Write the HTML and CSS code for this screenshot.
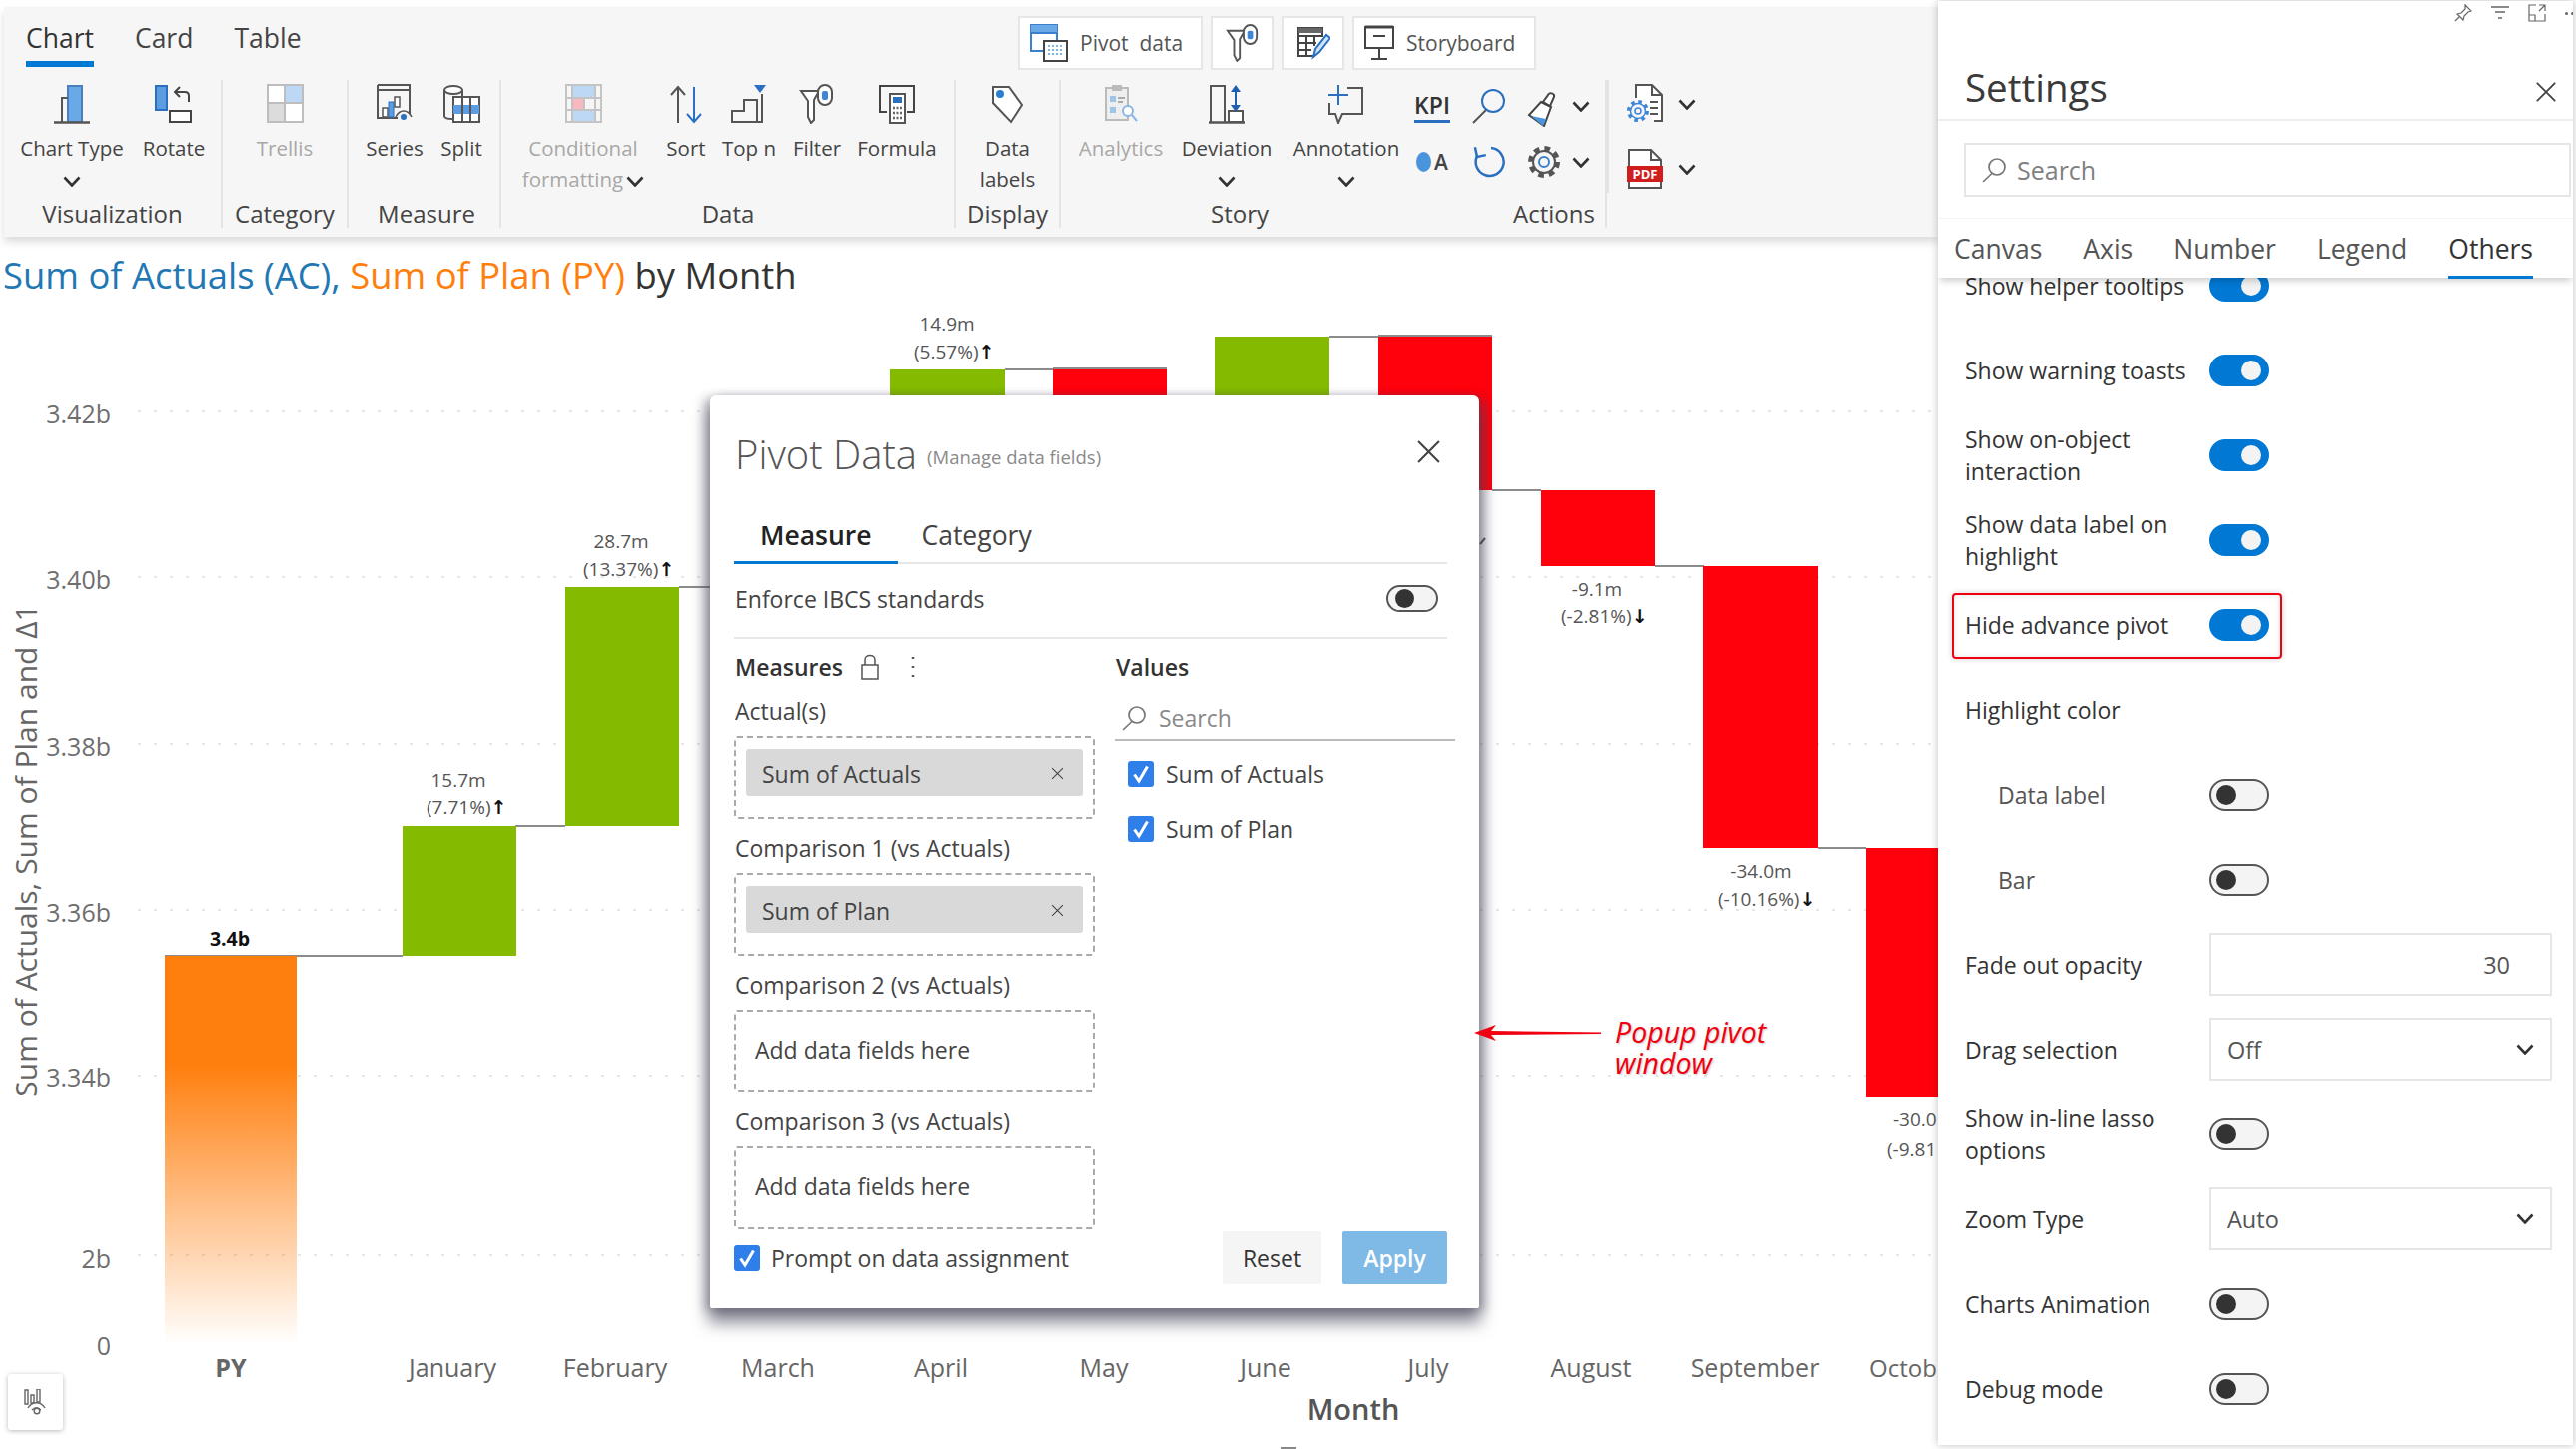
FILE: index.html
```html
<!DOCTYPE html>
<html lang="en">
<head>
<meta charset="utf-8">
<title>Pivot Data</title>
<link rel="stylesheet" href="styles.css">
</head>
<body>
<svg class="sprite" width="0" height="0" aria-hidden="true">
  <symbol id="chev" viewBox="0 0 18 11"><path d="M1.5 1.5 9 9.5l7.5-8" fill="none" stroke="#333" stroke-width="2.6"/></symbol>
  <symbol id="cross" viewBox="0 0 24 24"><path d="M2 2l20 20M22 2 2 22" fill="none" stroke="#444" stroke-width="2"/></symbol>
  <symbol id="mag" viewBox="0 0 26 26"><circle cx="16" cy="10" r="8" fill="none" stroke="#777" stroke-width="1.7"/><path d="M11 16.500 2 25" fill="none" stroke="#777" stroke-width="1.7"/></symbol>
  <symbol id="tick" viewBox="0 0 26 26"><rect width="26" height="26" rx="3" fill="#2f7fea"/><path d="M6.500 13.500 11 20 19.500 5.500" fill="none" stroke="#fff" stroke-width="3"/></symbol>
  <symbol id="funnel" viewBox="0 0 36 40"><path d="M2 7h18l-5 9v20l-3 3-3-6V17z" fill="#fff" stroke="#555" stroke-width="2"/><rect x="19" y="1" width="14" height="20" rx="7" fill="#fff" stroke="#555" stroke-width="2"/><rect x="23" y="7" width="6" height="9" rx="2" fill="#3f86d8"/></symbol>
</svg>

<div class="app">
  <main class="main">
    <header class="ribbon">
      <div class="ribbon-top">
        <nav class="rtabs">
          <span class="rtab rtab-on">Chart</span>
          <span class="rtab">Card</span>
          <span class="rtab">Table</span>
        </nav>
        <div class="quick">
          <button class="qbtn qbtn-pivot">
            <svg width="38" height="38" viewBox="0 0 38 38"><rect x="1" y="1" width="26" height="26" fill="#fff" stroke="#3b7fcf" stroke-width="2"/><rect x="1" y="1" width="26" height="8" fill="#6aa9e8"/><path d="M1 9h26" stroke="#3b7fcf" stroke-width="2"/><rect x="14" y="17" width="23" height="20" fill="#fff" stroke="#444" stroke-width="2"/><path d="M18 22h16M18 26h16M18 30h16" stroke="#7db5ea" stroke-width="2" stroke-dasharray="2 2"/></svg>
            <span>Pivot&nbsp; data</span>
          </button>
          <button class="qbtn qbtn-ico"><svg width="34" height="38" viewBox="0 0 36 40"><use href="#funnel"/></svg></button>
          <button class="qbtn qbtn-ico">
            <svg width="34" height="34" viewBox="0 0 34 34"><path d="M2 2h24v8H2zM2 10h22M2 10v20h16M2 17h18M2 24h13M10 10v20M18 10v10" fill="none" stroke="#444" stroke-width="2"/><path d="M2 2h24v5H2z" fill="#666"/><path d="M17 31l2-8 11-14 4 3-11 14z" fill="#cfe3f8" stroke="#2a6fc0" stroke-width="2"/></svg>
          </button>
          <button class="qbtn qbtn-story">
            <svg width="30" height="36" viewBox="0 0 30 36"><rect x="1" y="2" width="28" height="21" fill="#fff" stroke="#444" stroke-width="2"/><path d="M1 2h28" stroke="#444" stroke-width="3"/><path d="M9 11h12" stroke="#444" stroke-width="2"/><path d="M15 23v11M7 34h16" stroke="#444" stroke-width="2"/></svg>
            <span>Storyboard</span>
          </button>
        </div>
      </div>

      <div class="groups">
        <section class="group g-viz">
          <div class="tools">
            <div class="tool">
              <svg class="ic" width="36" height="40" viewBox="0 0 36 40"><rect x="14" y="2" width="14" height="36" fill="#6aa9e8" stroke="#4a7fbd" stroke-width="2"/><path d="M14 14H8v24" fill="none" stroke="#555" stroke-width="2"/><path d="M0 38.500h36" stroke="#555" stroke-width="2.500"/></svg>
              <span class="tlabel">Chart Type</span>
              <svg class="tchev" width="18" height="11"><use href="#chev"/></svg>
            </div>
            <div class="tool">
              <svg class="ic" width="38" height="40" viewBox="0 0 38 40"><rect x="1" y="2" width="11" height="24" fill="#5b9de0" stroke="#2a6fc0" stroke-width="2"/><path d="M34 18v-6c0-3-2-4-4-4h-9M25 3l-5 5 5 5" fill="none" stroke="#444" stroke-width="2"/><rect x="15" y="27" width="21" height="11" fill="#fff" stroke="#444" stroke-width="2"/></svg>
              <span class="tlabel">Rotate</span>
            </div>
          </div>
          <h3 class="glabel">Visualization</h3>
        </section>

        <section class="group g-cat">
          <div class="tools">
            <div class="tool is-off">
              <svg class="ic" width="37" height="40" viewBox="0 0 37 40"><rect x="1" y="1" width="17" height="18" fill="#fff"/><rect x="18" y="1" width="18" height="18" fill="#bcd8f5"/><rect x="1" y="19" width="17" height="19" fill="#dcdcdc"/><rect x="18" y="19" width="18" height="19" fill="#fff"/><path d="M1 1h35v37H1zM18 1v37M1 19h35" fill="none" stroke="#bdbdbd" stroke-width="2"/></svg>
              <span class="tlabel">Trellis</span>
            </div>
          </div>
          <h3 class="glabel">Category</h3>
        </section>

        <section class="group g-mea">
          <div class="tools">
            <div class="tool">
              <svg class="ic" width="38" height="40" viewBox="0 0 38 40"><path d="M2 1h32v29M2 1v33h20" fill="none" stroke="#555" stroke-width="2"/><path d="M2 6h32" stroke="#555" stroke-width="2"/><rect x="7" y="24" width="5" height="9" fill="#fff" stroke="#555" stroke-width="1.500"/><rect x="13" y="18" width="5" height="15" fill="#5b9de0" stroke="#2a6fc0"/><rect x="19" y="13" width="5" height="10" fill="#fff" stroke="#555" stroke-width="1.500"/><path d="M20 33c4-8 12-8 16 0" fill="#f3f3f3" stroke="#555" stroke-width="1.500"/><circle cx="28" cy="33" r="3" fill="#2a6fc0"/></svg>
              <span class="tlabel">Series</span>
            </div>
            <div class="tool">
              <svg class="ic" width="38" height="40" viewBox="0 0 38 40"><ellipse cx="11" cy="6" rx="9" ry="4" fill="#fff" stroke="#555" stroke-width="2"/><path d="M2 6v26c0 2 4 3 8 3M20 6v6" fill="none" stroke="#555" stroke-width="2"/><rect x="11" y="13" width="26" height="25" fill="#fff" stroke="#555" stroke-width="2"/><rect x="11" y="21" width="26" height="9" fill="#5b9de0"/><path d="M20 13v25M28 13v25" stroke="#555" stroke-width="2"/></svg>
              <span class="tlabel">Split</span>
            </div>
          </div>
          <h3 class="glabel">Measure</h3>
        </section>

        <section class="group g-data">
          <div class="tools">
            <div class="tool is-off">
              <svg class="ic" width="37" height="40" viewBox="0 0 37 40"><rect x="7" y="1" width="23" height="12" fill="#bcd8f5"/><rect x="7" y="14" width="12" height="12" fill="#f6b9bf"/><rect x="7" y="27" width="23" height="11" fill="#bcd8f5"/><path d="M1 1h35v37H1zM1 14h35M1 26h35M7 1v37M30 1v37M19 14v12" fill="none" stroke="#c4c4c4" stroke-width="2"/></svg>
              <span class="tlabel">Conditional formatting<svg class="inchev" width="18" height="11"><use href="#chev"/></svg></span>
            </div>
            <div class="tool">
              <svg class="ic" width="34" height="40" viewBox="0 0 34 40"><path d="M9 39V3M2 11l7-8 7 8" fill="none" stroke="#555" stroke-width="2"/><path d="M25 3v35M18 30l7 8 7-8" fill="none" stroke="#2a6fc0" stroke-width="2"/></svg>
              <span class="tlabel">Sort</span>
            </div>
            <div class="tool">
              <svg class="ic" width="36" height="40" viewBox="0 0 36 40"><path d="M1 38V27h12V16h13V38zM31 10v28H1" fill="none" stroke="#555" stroke-width="2"/><path d="M23 1h12l-6 8z" fill="#2a6fc0"/></svg>
              <span class="tlabel">Top n</span>
            </div>
            <div class="tool">
              <svg class="ic" width="36" height="40" viewBox="0 0 36 40"><use href="#funnel"/></svg>
              <span class="tlabel">Filter</span>
            </div>
            <div class="tool">
              <svg class="ic" width="38" height="40" viewBox="0 0 38 40"><path d="M9 28H2V2h34v26h-7" fill="none" stroke="#444" stroke-width="2"/><rect x="12" y="10" width="15" height="29" fill="#fff" stroke="#555" stroke-width="2"/><rect x="15" y="13" width="9" height="6" fill="#2a6fc0"/><path d="M15 24h9M15 29h9M15 34h9" stroke="#666" stroke-width="2.500" stroke-dasharray="2 1.500"/></svg>
              <span class="tlabel">Formula</span>
            </div>
          </div>
          <h3 class="glabel">Data</h3>
        </section>

        <section class="group g-dis">
          <div class="tools">
            <div class="tool">
              <svg class="ic" width="36" height="40" viewBox="0 0 36 40"><path d="M3 3h16l13 18-11 17L3 19z" fill="#fff" stroke="#555" stroke-width="2"/><circle cx="10" cy="10" r="4" fill="#2a7fd0"/></svg>
              <span class="tlabel">Data labels</span>
            </div>
          </div>
          <h3 class="glabel">Display</h3>
        </section>

        <section class="group g-sto">
          <div class="tools">
            <div class="tool is-off">
              <svg class="ic" width="34" height="40" viewBox="0 0 34 40"><rect x="2" y="4" width="22" height="32" fill="#eee" stroke="#bbb" stroke-width="2"/><rect x="8" y="1" width="10" height="6" fill="#bbb"/><rect x="6" y="12" width="6" height="6" fill="#9fc4ea"/><rect x="6" y="23" width="6" height="6" fill="#9fc4ea"/><path d="M14 14h7M14 18h5" stroke="#aaa" stroke-width="2"/><circle cx="24" cy="27" r="5" fill="#fff" stroke="#8ab6e5" stroke-width="2"/><path d="M28 31l5 6" stroke="#8ab6e5" stroke-width="2"/></svg>
              <span class="tlabel">Analytics</span>
            </div>
            <div class="tool">
              <svg class="ic" width="38" height="40" viewBox="0 0 38 40"><path d="M3 38V2h14v36" fill="none" stroke="#555" stroke-width="2"/><path d="M1 38.500h36" stroke="#555" stroke-width="2.500"/><rect x="21" y="27" width="14" height="11" fill="#fff" stroke="#555" stroke-width="2"/><path d="M28 5v20" stroke="#1e5fae" stroke-width="2"/><path d="M23 8l5-7 5 7zM23 21l5 7 5-7z" fill="#1e5fae"/></svg>
              <span class="tlabel">Deviation</span>
              <svg class="tchev" width="18" height="11"><use href="#chev"/></svg>
            </div>
            <div class="tool">
              <svg class="ic" width="38" height="40" viewBox="0 0 38 40"><path d="M20 4h15v26H15l-4 9-3-9H2V19" fill="none" stroke="#555" stroke-width="2"/><path d="M11 1v20M1 11h20" stroke="#2a6fc0" stroke-width="2"/></svg>
              <span class="tlabel">Annotation</span>
              <svg class="tchev" width="18" height="11"><use href="#chev"/></svg>
            </div>
          </div>
          <h3 class="glabel">Story</h3>
        </section>

        <section class="group g-act">
          <div class="actions">
            <span class="kpi">KPI</span>
            <svg width="36" height="36" viewBox="0 0 36 36"><circle cx="23" cy="13" r="11" fill="none" stroke="#2a6fc0" stroke-width="2"/><path d="M16 22 3 35" stroke="#555" stroke-width="2"/></svg>
            <svg class="brush" width="36" height="36" viewBox="0 0 36 36"><path d="M15 11l10 5-7 19L3 24z" fill="#fff" stroke="#444" stroke-width="2"/><path d="M5 25l15 3-3 7z" fill="#4a93dd"/><path d="M22 4c1-3 7-2 6 2l-4 9-7-4z" fill="#fff" stroke="#444" stroke-width="2"/></svg>
            <svg width="18" height="11"><use href="#chev"/></svg>
            <span class="oa"><i class="oa-dot"></i>A</span>
            <svg width="34" height="34" viewBox="0 0 34 34"><path d="M20 3a14 14 0 1 1-14 8" fill="none" stroke="#2a6fc0" stroke-width="2.500"/><path d="M6 2v10h9" fill="none" stroke="#2a6fc0" stroke-width="2.500" transform="rotate(-12 6 12)"/></svg>
            <svg width="34" height="34" viewBox="0 0 34 34"><circle cx="17" cy="17" r="13.500" fill="none" stroke="#555" stroke-width="5" stroke-dasharray="5.600 5"/><circle cx="17" cy="17" r="11" fill="#f6f6f6" stroke="#555" stroke-width="2"/><circle cx="17" cy="17" r="5" fill="none" stroke="#3f7fc8" stroke-width="2"/></svg>
            <svg width="18" height="11"><use href="#chev"/></svg>
          </div>
          <h3 class="glabel glabel-act">Actions</h3>
        </section>

        <section class="g-exp">
          <svg width="38" height="40" viewBox="0 0 38 40"><path d="M10 14V1h16l10 10v26h-8" fill="#fff" stroke="#555" stroke-width="2"/><path d="M26 1v10h10" fill="none" stroke="#555" stroke-width="2"/><path d="M24 18h8M24 24h8M24 30h8" stroke="#555" stroke-width="2"/><circle cx="12" cy="27" r="9" fill="none" stroke="#3f86d8" stroke-width="4" stroke-dasharray="3.500 3.570"/><circle cx="12" cy="27" r="7.500" fill="#f6f6f6" stroke="#3f86d8" stroke-width="1.500"/><circle cx="12" cy="27" r="3" fill="none" stroke="#3f86d8" stroke-width="1.500"/></svg>
          <svg width="18" height="11"><use href="#chev"/></svg>
          <svg width="38" height="40" viewBox="0 0 38 40"><path d="M3 18V1h22l10 10v7M3 32v7h32v-7" fill="#fff" stroke="#555" stroke-width="2"/><path d="M25 1v10h10" fill="none" stroke="#555" stroke-width="2"/><rect x="1" y="17" width="36" height="16" fill="#d01e1e"/><text class="pdf" x="19" y="30" text-anchor="middle">PDF</text></svg>
          <svg width="18" height="11"><use href="#chev"/></svg>
        </section>
      </div>
    </header>

    <h1 class="title"><span class="t-blue">Sum of Actuals (AC),</span> <span class="t-orange">Sum of Plan (PY)</span> by Month</h1>

    <svg class="chart" width="1940" height="1153" viewBox="0 298 1940 1153">
      <defs>
        <linearGradient id="pyfade" x1="0" y1="0" x2="0" y2="1">
          <stop offset="0.28" stop-color="#ff7f0e"/>
          <stop offset="1" stop-color="#ff7f0e" stop-opacity="0"/>
        </linearGradient>
      </defs>
      <g class="grid">
        <path d="M138 412H1940"/><path d="M138 578H1940"/><path d="M138 745H1940"/><path d="M138 911H1940"/><path d="M138 1077H1940"/><path d="M138 1257H1940"/>
      </g>
      <g class="ytick">
        <text x="111" y="424">3.42b</text><text x="111" y="590">3.40b</text><text x="111" y="757">3.38b</text><text x="111" y="923">3.36b</text><text x="111" y="1088">3.34b</text><text x="111" y="1270">2b</text><text x="111" y="1357">0</text>
      </g>
      <text class="ytitle" transform="translate(37 852) rotate(-90)">Sum of Actuals, Sum of Plan and Δ1</text>
      <g class="conn">
        <path d="M165 957H403"/><path d="M516 827H566"/><path d="M680 588H729"/><path d="M1006 370H1054"/><path d="M1331 337H1380"/><path d="M1380 336H1494"/><path d="M1054 369H1168"/><path d="M1494 491H1543"/><path d="M1657 567H1706"/><path d="M1820 849H1868"/>
      </g>
      <rect x="165" y="957" width="132" height="390" fill="url(#pyfade)"/>
      <g class="up">
        <rect x="403" y="827" width="114" height="130"/><rect x="566" y="588" width="114" height="239"/><rect x="891" y="370" width="115" height="60"/><rect x="1216" y="337" width="115" height="90"/>
      </g>
      <g class="down">
        <rect x="1054" y="370" width="114" height="60"/><rect x="1380" y="337" width="114" height="154"/><rect x="1543" y="491" width="114" height="76"/><rect x="1705" y="567" width="115" height="282"/><rect x="1868" y="849" width="72" height="250"/>
      </g>
      <text class="dl dl-b" x="230" y="947">3.4b</text>
      <g class="dl">
        <text x="459" y="788">15.7m</text>
        <text x="427" y="815" class="st">(7.71%)<tspan class="ar">↑</tspan></text>
        <text x="622" y="549">28.7m</text>
        <text x="584" y="577" class="st">(13.37%)<tspan class="ar">↑</tspan></text>
        <text x="948" y="331">14.9m</text>
        <text x="915" y="359" class="st">(5.57%)<tspan class="ar">↑</tspan></text>
        <text x="1599" y="597">-9.1m</text>
        <text x="1563" y="624" class="st">(-2.81%)<tspan class="ar">↓</tspan></text>
        <text x="1763" y="879">-34.0m</text>
        <text x="1720" y="907" class="st">(-10.16%)<tspan class="ar">↓</tspan></text>
        <text x="1895" y="1128" class="st">-30.0</text>
        <text x="1889" y="1158" class="st">(-9.81</text>
      </g>
      <path d="M1482 545l5-6" stroke="#555" stroke-width="2"/>
      <g class="xtick">
        <text x="231" y="1379" class="x-b">PY</text><text x="453" y="1379">January</text><text x="616" y="1379">February</text><text x="779" y="1379">March</text><text x="942" y="1379">April</text><text x="1105" y="1379">May</text><text x="1267" y="1379">June</text><text x="1430" y="1379">July</text><text x="1593" y="1379">August</text><text x="1757" y="1379">September</text><text x="1871" y="1379" class="x-s">Octob</text>
      </g>
      <text class="xtitle" x="1355" y="1422">Month</text>
      <rect x="1282" y="1449" width="16" height="2" fill="#888"/>
    </svg>

    <button class="viewbtn" aria-label="View">
      <svg width="26" height="26" viewBox="0 0 26 26"><path d="M2 1h3v14H2zM8 6h3v8H8zM14 0h3v13h-3z" fill="none" stroke="#666" stroke-width="1.400"/><path d="M5 19c4-7 13-7 17 0M9 21c3-3 6-3 9 0" fill="none" stroke="#666" stroke-width="1.400"/><circle cx="14" cy="22" r="2.800" fill="none" stroke="#666" stroke-width="1.400"/></svg>
    </button>

    <section class="dialog">
      <div class="d-head">
        <h2 class="d-title">Pivot Data</h2>
        <span class="d-sub">(Manage data fields)</span>
        <svg class="d-close" width="25" height="25"><use href="#cross"/></svg>
      </div>
      <div class="d-tabs">
        <span class="d-tab d-tab-on">Measure</span>
        <span class="d-tab">Category</span>
      </div>
      <div class="d-enforce">
        <span>Enforce IBCS standards</span>
        <span class="toggle toggle-sm"></span>
      </div>
      <div class="d-body">
        <div class="d-left">
          <div class="d-hd">
            <strong>Measures</strong>
            <svg width="18" height="26" viewBox="0 0 18 26"><path d="M4 11V6c0-6 10-6 10 0v5" fill="none" stroke="#555" stroke-width="1.500"/><rect x="1" y="11" width="16" height="14" fill="none" stroke="#555" stroke-width="1.500"/></svg>
            <svg class="dots" width="4" height="22" viewBox="0 0 4 22"><path d="M2 1v2M2 10v2M2 19v2" stroke="#555" stroke-width="2.500"/></svg>
          </div>
          <div class="fields">
            <div class="field">
              <label>Actual(s)</label>
              <div class="drop"><div class="chip"><span>Sum of Actuals</span><svg width="13" height="13"><use href="#cross"/></svg></div></div>
            </div>
            <div class="field">
              <label>Comparison 1 (vs Actuals)</label>
              <div class="drop"><div class="chip"><span>Sum of Plan</span><svg width="13" height="13"><use href="#cross"/></svg></div></div>
            </div>
            <div class="field">
              <label>Comparison 2 (vs Actuals)</label>
              <div class="drop drop-empty">Add data fields here</div>
            </div>
            <div class="field">
              <label>Comparison 3 (vs Actuals)</label>
              <div class="drop drop-empty">Add data fields here</div>
            </div>
          </div>
          <div class="prompt"><svg width="26" height="26"><use href="#tick"/></svg><span>Prompt on data assignment</span></div>
        </div>
        <div class="d-right">
          <div class="d-hd"><strong>Values</strong></div>
          <div class="v-search"><svg width="26" height="26"><use href="#mag"/></svg><span>Search</span></div>
          <div class="v-list">
            <div class="v-item"><svg width="26" height="26"><use href="#tick"/></svg><span>Sum of Actuals</span></div>
            <div class="v-item"><svg width="26" height="26"><use href="#tick"/></svg><span>Sum of Plan</span></div>
          </div>
          <div class="d-actions">
            <button class="btn btn-reset">Reset</button>
            <button class="btn btn-apply">Apply</button>
          </div>
        </div>
      </div>
    </section>

    <div class="annot">
      <svg width="127" height="16" viewBox="0 0 127 16"><path d="M0 8 22 0l-5 6 110 1.500v1.500L17 10l5 6z" fill="#f00010"/></svg>
      <p>Popup pivot<br>window</p>
    </div>
  </main>

  <aside class="settings">
    <div class="s-head">
      <div class="s-icons">
        <svg width="18" height="18" viewBox="0 0 18 18"><path d="M11 1l6 6-3 1-4 4-1 4-6-6 4-1 4-4zM5 13l-4 4" fill="none" stroke="#666" stroke-width="1.200"/></svg>
        <svg width="18" height="14" viewBox="0 0 18 14"><path d="M0 1h18M4 6h10M7 12h4" stroke="#666" stroke-width="1.500"/></svg>
        <svg width="18" height="18" viewBox="0 0 18 18"><path d="M8 1H1v16h16v-7M11 1h6v6M17 1l-6 6M1 11h6v6" fill="none" stroke="#666" stroke-width="1.200"/></svg>
        <span class="s-more"><i></i><i></i></span>
      </div>
      <div class="s-title">
        <h2>Settings</h2>
        <svg class="s-close" width="22" height="22"><use href="#cross"/></svg>
      </div>
      <div class="s-search"><svg width="26" height="26"><use href="#mag"/></svg><span>Search</span></div>
      <div class="s-tabs">
        <span class="s-tab">Canvas</span>
        <span class="s-tab">Axis</span>
        <span class="s-tab">Number</span>
        <span class="s-tab">Legend</span>
        <span class="s-tab s-tab-on">Others</span>
      </div>
    </div>
    <div class="s-list">
      <div class="row"><span class="lbl">Show helper tooltips</span><span class="toggle toggle-on"></span></div>
      <div class="row"><span class="lbl">Show warning toasts</span><span class="toggle toggle-on"></span></div>
      <div class="row"><span class="lbl">Show on-object interaction</span><span class="toggle toggle-on"></span></div>
      <div class="row"><span class="lbl">Show data label on highlight</span><span class="toggle toggle-on"></span></div>
      <div class="row row-mark"><span class="lbl">Hide advance pivot</span><span class="toggle toggle-on"></span></div>
      <div class="row"><span class="lbl">Highlight color</span></div>
      <div class="row"><span class="lbl lbl-sub">Data label</span><span class="toggle"></span></div>
      <div class="row"><span class="lbl lbl-sub">Bar</span><span class="toggle"></span></div>
      <div class="row"><span class="lbl">Fade out opacity</span><div class="ctl ctl-num">30</div></div>
      <div class="row"><span class="lbl">Drag selection</span><div class="ctl"><span>Off</span><svg width="18" height="11"><use href="#chev"/></svg></div></div>
      <div class="row"><span class="lbl">Show in-line lasso options</span><span class="toggle"></span></div>
      <div class="row"><span class="lbl">Zoom Type</span><div class="ctl"><span>Auto</span><svg width="18" height="11"><use href="#chev"/></svg></div></div>
      <div class="row"><span class="lbl">Charts Animation</span><span class="toggle"></span></div>
      <div class="row"><span class="lbl">Debug mode</span><span class="toggle"></span></div>
    </div>
  </aside>
</div>
</body>
</html>
```

FILE: styles.css
```css
* { box-sizing: border-box; }
html, body { margin: 0; padding: 0; background: #fff; }
body { font-family: "Open Sans", "Liberation Sans", sans-serif; color: #333; overflow: hidden; }
button { font-family: inherit; border: 0; padding: 0; background: none; color: inherit; }
h1, h2, h3, p { margin: 0; font-weight: 400; }
svg { flex: none; }
.sprite { position: absolute; }

.app { display: flex; width: 2579px; height: 1451px; overflow: hidden; }
.main { position: relative; width: 1940px; flex: none; overflow: hidden; }

/* Ribbon */
.ribbon { margin: 7px 0 0 4px; height: 230px; background: #f6f6f6; box-shadow: 0 5px 8px rgba(0,0,0,.14); }
.ribbon-top { display: grid; grid-template-columns: 993px auto; padding-left: 22px; height: 73px; }
.rtabs { display: flex; gap: 41px; align-items: flex-start; }
.rtab { height: 60px; padding-top: 13px; line-height: 36px; font-size: 26.500px; color: #444; }
.rtab-on { color: #333; border-bottom: 6px solid #0078d4; }
.quick { display: flex; gap: 8px; margin-top: 9px; height: 54px; }
.qbtn { display: flex; align-items: center; background: #fff; border: 2px solid #e6e6e6; font-size: 21px; color: #555; }
.qbtn-pivot { width: 185px; gap: 12px; padding-left: 10px; }
.qbtn-ico { width: 63px; justify-content: center; }
.qbtn-story { width: 184px; gap: 12px; padding-left: 10px; }

.groups { display: flex; height: 157px; }
.group { display: flex; flex-direction: column; height: 148px; border-right: 2px solid #e4e4e4; }
.tools { flex: 1; display: grid; align-items: start; }
.tool { display: flex; flex-direction: column; align-items: center; text-align: center; padding-top: 4px; }
.ic { display: block; }
.tlabel { margin-top: 9px; line-height: 31px; font-size: 20.500px; color: #444; white-space: normal; }
.tchev { margin-top: 12px; }
.inchev { margin-left: 3px; }
.is-off .tlabel { color: #a8a8a8; }
.glabel { line-height: 30px; font-size: 24px; color: #444; text-align: center; font-weight: 500; margin-bottom: -1px; white-space: nowrap; }

.g-viz { width: 219px; padding-left: 16px; }
.g-viz .tools { grid-template-columns: 104px 64px; column-gap: 18px; }
.g-viz .glabel { padding-right: 16px; }
.g-cat { width: 126px; }
.g-cat .tools { grid-template-columns: 1fr; }
.g-mea { width: 153px; padding-left: 11px; }
.g-mea .tools { grid-template-columns: 70px 64px; }
.g-mea .glabel { padding-right: 6px; }
.g-data { width: 455px; padding-left: 14px; }
.g-data .tools { grid-template-columns: 136px 70px 56px 80px 80px; }
.g-data .glabel { padding-right: 13px; }
.g-dis { width: 105px; }
.g-dis .tools { grid-template-columns: 1fr; }
.g-dis .tlabel { width: 70px; }
.g-sto { width: 350px; border-right: 0; padding-left: 10px; }
.g-sto .tools { grid-template-columns: 100px 112px 128px; }
.g-sto .glabel { padding-right: 2px; }
.g-act { width: 197px; }
.actions { flex: 1; display: grid; grid-template-columns: 44px 68px 44px 30px; grid-template-rows: 52px 60px; place-items: center; align-content: start; }
.brush { margin-top: 6px; }
.glabel-act { padding-left: 93px; }
.kpi { font-size: 23px; font-weight: 600; line-height: 30px; color: #333; border-bottom: 3px solid #2a6fc0; }
.oa { display: flex; align-items: center; gap: 3px; font-size: 21px; font-weight: 600; color: #444; }
.oa-dot { display: block; width: 15px; height: 20px; border-radius: 50%; background: #4a93dd; }
.pdf { font-size: 13px; font-weight: 700; fill: #fff; font-family: "Open Sans", sans-serif; }
.g-exp { width: 111px; height: 113px; border-left: 2px solid #e4e4e4; padding-left: 14px; display: grid; grid-template-columns: 44px 40px; grid-template-rows: 48px 82px; place-items: center; }

/* Title */
.title { margin-top: 15px; padding-left: 3px; line-height: 46px; font-size: 36.400px; color: #333; white-space: nowrap; }
.t-blue { color: #1f77b4; }
.t-orange { color: #ff7f0e; }

/* Chart */
.chart { display: block; font-family: "Open Sans", sans-serif; }
.grid path { stroke: #e6e6e6; stroke-width: 2; stroke-dasharray: 3 13; }
.ytick text { font-size: 25px; fill: #6e6e6e; text-anchor: end; }
.ytitle { font-size: 30px; fill: #666; text-anchor: middle; }
.conn path { stroke: #8c8c8c; stroke-width: 2; }
.up rect { fill: #84bb00; }
.down rect { fill: #ff000d; }
.dl { font-size: 19px; fill: #555; text-anchor: middle; }
.dl .st { text-anchor: start; }
.dl .ar { fill: #111; font-weight: 700; font-family: "DejaVu Sans", sans-serif; }
.dl-b { font-weight: 700; fill: #111; font-size: 19.500px; }
.xtick text { font-size: 25px; fill: #666; text-anchor: middle; }
.xtick .x-b { font-weight: 700; }
.xtick .x-s { text-anchor: start; font-size: 24px; }
.xtitle { font-size: 29px; font-weight: 600; fill: #555; text-anchor: middle; }

.viewbtn { position: absolute; left: 8px; top: 1376px; width: 55px; height: 56px; display: flex; align-items: center; justify-content: center; background: #fff; border-radius: 3px; box-shadow: 0 1px 5px rgba(0,0,0,.28); }

/* Dialog */
.dialog { position: absolute; left: 711px; top: 396px; width: 770px; height: 914px; background: #fff; border-radius: 6px 6px 2px 2px; box-shadow: 0 13px 16px 2px rgba(70,70,90,.62), -6px 2px 10px rgba(70,70,90,.3), 6px 2px 10px rgba(70,70,90,.3); }
.d-head { position: relative; display: flex; align-items: flex-start; height: 104px; padding: 33px 0 0 25px; }
.d-title { font-size: 40px; font-weight: 300; line-height: 52px; color: #555; }
.d-sub { margin: 16px 0 0 10px; line-height: 26px; font-size: 18.500px; color: #8a8a8a; }
.d-close { position: absolute; right: 38px; top: 44px; }
.d-tabs { display: flex; margin: 0 32px 0 24px; height: 65px; border-bottom: 2px solid #e8e8e8; }
.d-tab { height: 65px; padding: 16px 24px 0; line-height: 40px; font-size: 26.500px; color: #444; }
.d-tab-on { padding: 16px 26px 0; font-weight: 600; color: #222; border-bottom: 3px solid #0078d4; }
.d-enforce { display: flex; align-items: center; justify-content: space-between; margin: 0 32px 0 24px; height: 75px; padding: 0 9px 4px 1px; border-bottom: 2px solid #e8e8e8; font-size: 23px; color: #444; }
.d-body { display: grid; grid-template-columns: 361px 341px; column-gap: 20px; margin-left: 24px; height: 670px; padding: 10px 0 24px; }
.d-left { display: flex; flex-direction: column; }
.d-right { display: flex; flex-direction: column; }
.d-hd { display: flex; align-items: center; gap: 18px; height: 36px; padding-left: 1px; font-size: 23px; color: #333; }
.d-hd .dots { margin-left: 14px; }
.d-hd strong { font-weight: 600; }
.fields { display: grid; gap: 17px; margin-top: 14px; }
.field label { display: block; line-height: 24px; margin-bottom: 13px; padding-left: 1px; font-size: 23px; color: #444; }
.drop { height: 83px; border: 2px dashed #aaa; border-radius: 3px; }
.drop-empty { display: flex; align-items: center; padding: 0 0 3px 19px; font-size: 23px; color: #444; }
.chip { display: flex; align-items: center; justify-content: space-between; height: 47px; margin: 11px 10px 0; padding: 2px 19px 0 16px; background: #d9d9d9; border-radius: 3px; font-size: 23px; color: #444; }
.prompt { display: flex; align-items: center; gap: 11px; margin-top: 13px; font-size: 23px; color: #444; }
.v-search { display: flex; align-items: center; gap: 12px; height: 43px; margin-top: 13px; padding: 0 0 2px 6px; border-bottom: 2px solid #bbb; font-size: 23px; color: #8a8a8a; }
.v-list { display: grid; gap: 29px; margin-top: 20px; padding-left: 13px; }
.v-item { display: flex; align-items: center; gap: 12px; height: 26px; font-size: 23px; color: #444; }
.d-actions { display: flex; justify-content: flex-end; gap: 21px; margin-top: auto; padding-right: 8px; }
.btn { height: 53px; border-radius: 2px; font-size: 23px; }
.btn-reset { width: 99px; background: #f5f5f5; color: #333; font-weight: 500; }
.btn-apply { width: 105px; background: #7fb9e6; color: #fff; font-weight: 600; }

/* Annotation */
.annot { position: absolute; left: 1476px; top: 1018px; display: flex; gap: 14px; }
.annot svg { margin-top: 8px; }
.annot p { font-size: 28.500px; font-style: italic; line-height: 31px; color: #f00010; text-shadow: 1px 1px 2px rgba(0,0,0,.22); white-space: nowrap; }

/* Settings */
.settings { position: relative; width: 636px; height: 1446px; margin-top: 1px; flex: none; background: #fff; overflow: hidden; box-shadow: 0 0 8px rgba(0,0,0,.25); }
.s-head { position: relative; z-index: 2; background: #fff; box-shadow: 0 5px 7px -2px rgba(0,0,0,.2); }
.s-icons { display: flex; align-items: center; justify-content: flex-end; gap: 19px; height: 24px; }
.s-more { display: flex; gap: 3px; width: 8px; }
.s-more i { display: block; flex: none; width: 3px; height: 3px; background: #666; border-radius: 50%; }
.s-title { display: flex; align-items: center; justify-content: space-between; height: 96px; padding: 29px 16px 0 27px; border-bottom: 2px solid #eee; }
.s-title h2 { font-size: 38.500px; line-height: 50px; color: #3a3a3a; }
.s-close { margin-top: 11px; }
.s-search { display: flex; align-items: center; gap: 10px; height: 54px; margin: 22px 2px 0 26px; padding-left: 15px; border: 2px solid #e6e6e6; font-size: 25px; color: #808080; }
.s-tabs { display: flex; gap: 41px; height: 60px; margin-top: 21px; padding: 11px 0 0 16px; border-top: 1px solid #f3f3f3; }
.s-tab { height: 49px; line-height: 38px; font-size: 26.500px; color: #555; }
.s-tab-on { font-weight: 500; color: #333; border-bottom: 3px solid #0078d4; }

.s-list { margin-top: -35px; padding: 0 21px 0 27px; }
.row { position: relative; display: grid; grid-template-columns: 245px 343px; align-items: center; height: 85px; }
.lbl { padding-top: 2px; line-height: 31.500px; font-size: 23px; font-weight: 500; color: #333; }
.lbl-sub { padding-left: 33px; color: #555; font-weight: 400; }
.row-mark::after { content: ""; position: absolute; left: -13px; top: 11px; width: 327px; height: 62px; border: 2px solid #f00010; border-radius: 4px; box-shadow: 0 0 6px rgba(0,0,0,.18), inset 0 0 6px rgba(0,0,0,.1); pointer-events: none; }
.toggle { display: block; position: relative; width: 60px; height: 32px; border-radius: 16px; background: #f4f4f4; border: 2px solid #555; }
.toggle::after { content: ""; position: absolute; left: 5px; top: 4px; width: 20px; height: 20px; border-radius: 50%; background: #333; }
.toggle-on { background: #0078d4; border-color: #0078d4; }
.toggle-on::after { left: auto; right: 6px; background: #f3f3f3; }
.toggle-sm { width: 52px; height: 27px; }
.toggle-sm::after { left: 7px; top: 2px; width: 19px; height: 19px; }
.ctl { display: flex; align-items: center; justify-content: space-between; height: 63px; padding: 0 16px 0 16px; border: 2px solid #e6e6e6; font-size: 23.500px; color: #555; }
.ctl-num { justify-content: flex-end; padding-right: 40px; }
```
